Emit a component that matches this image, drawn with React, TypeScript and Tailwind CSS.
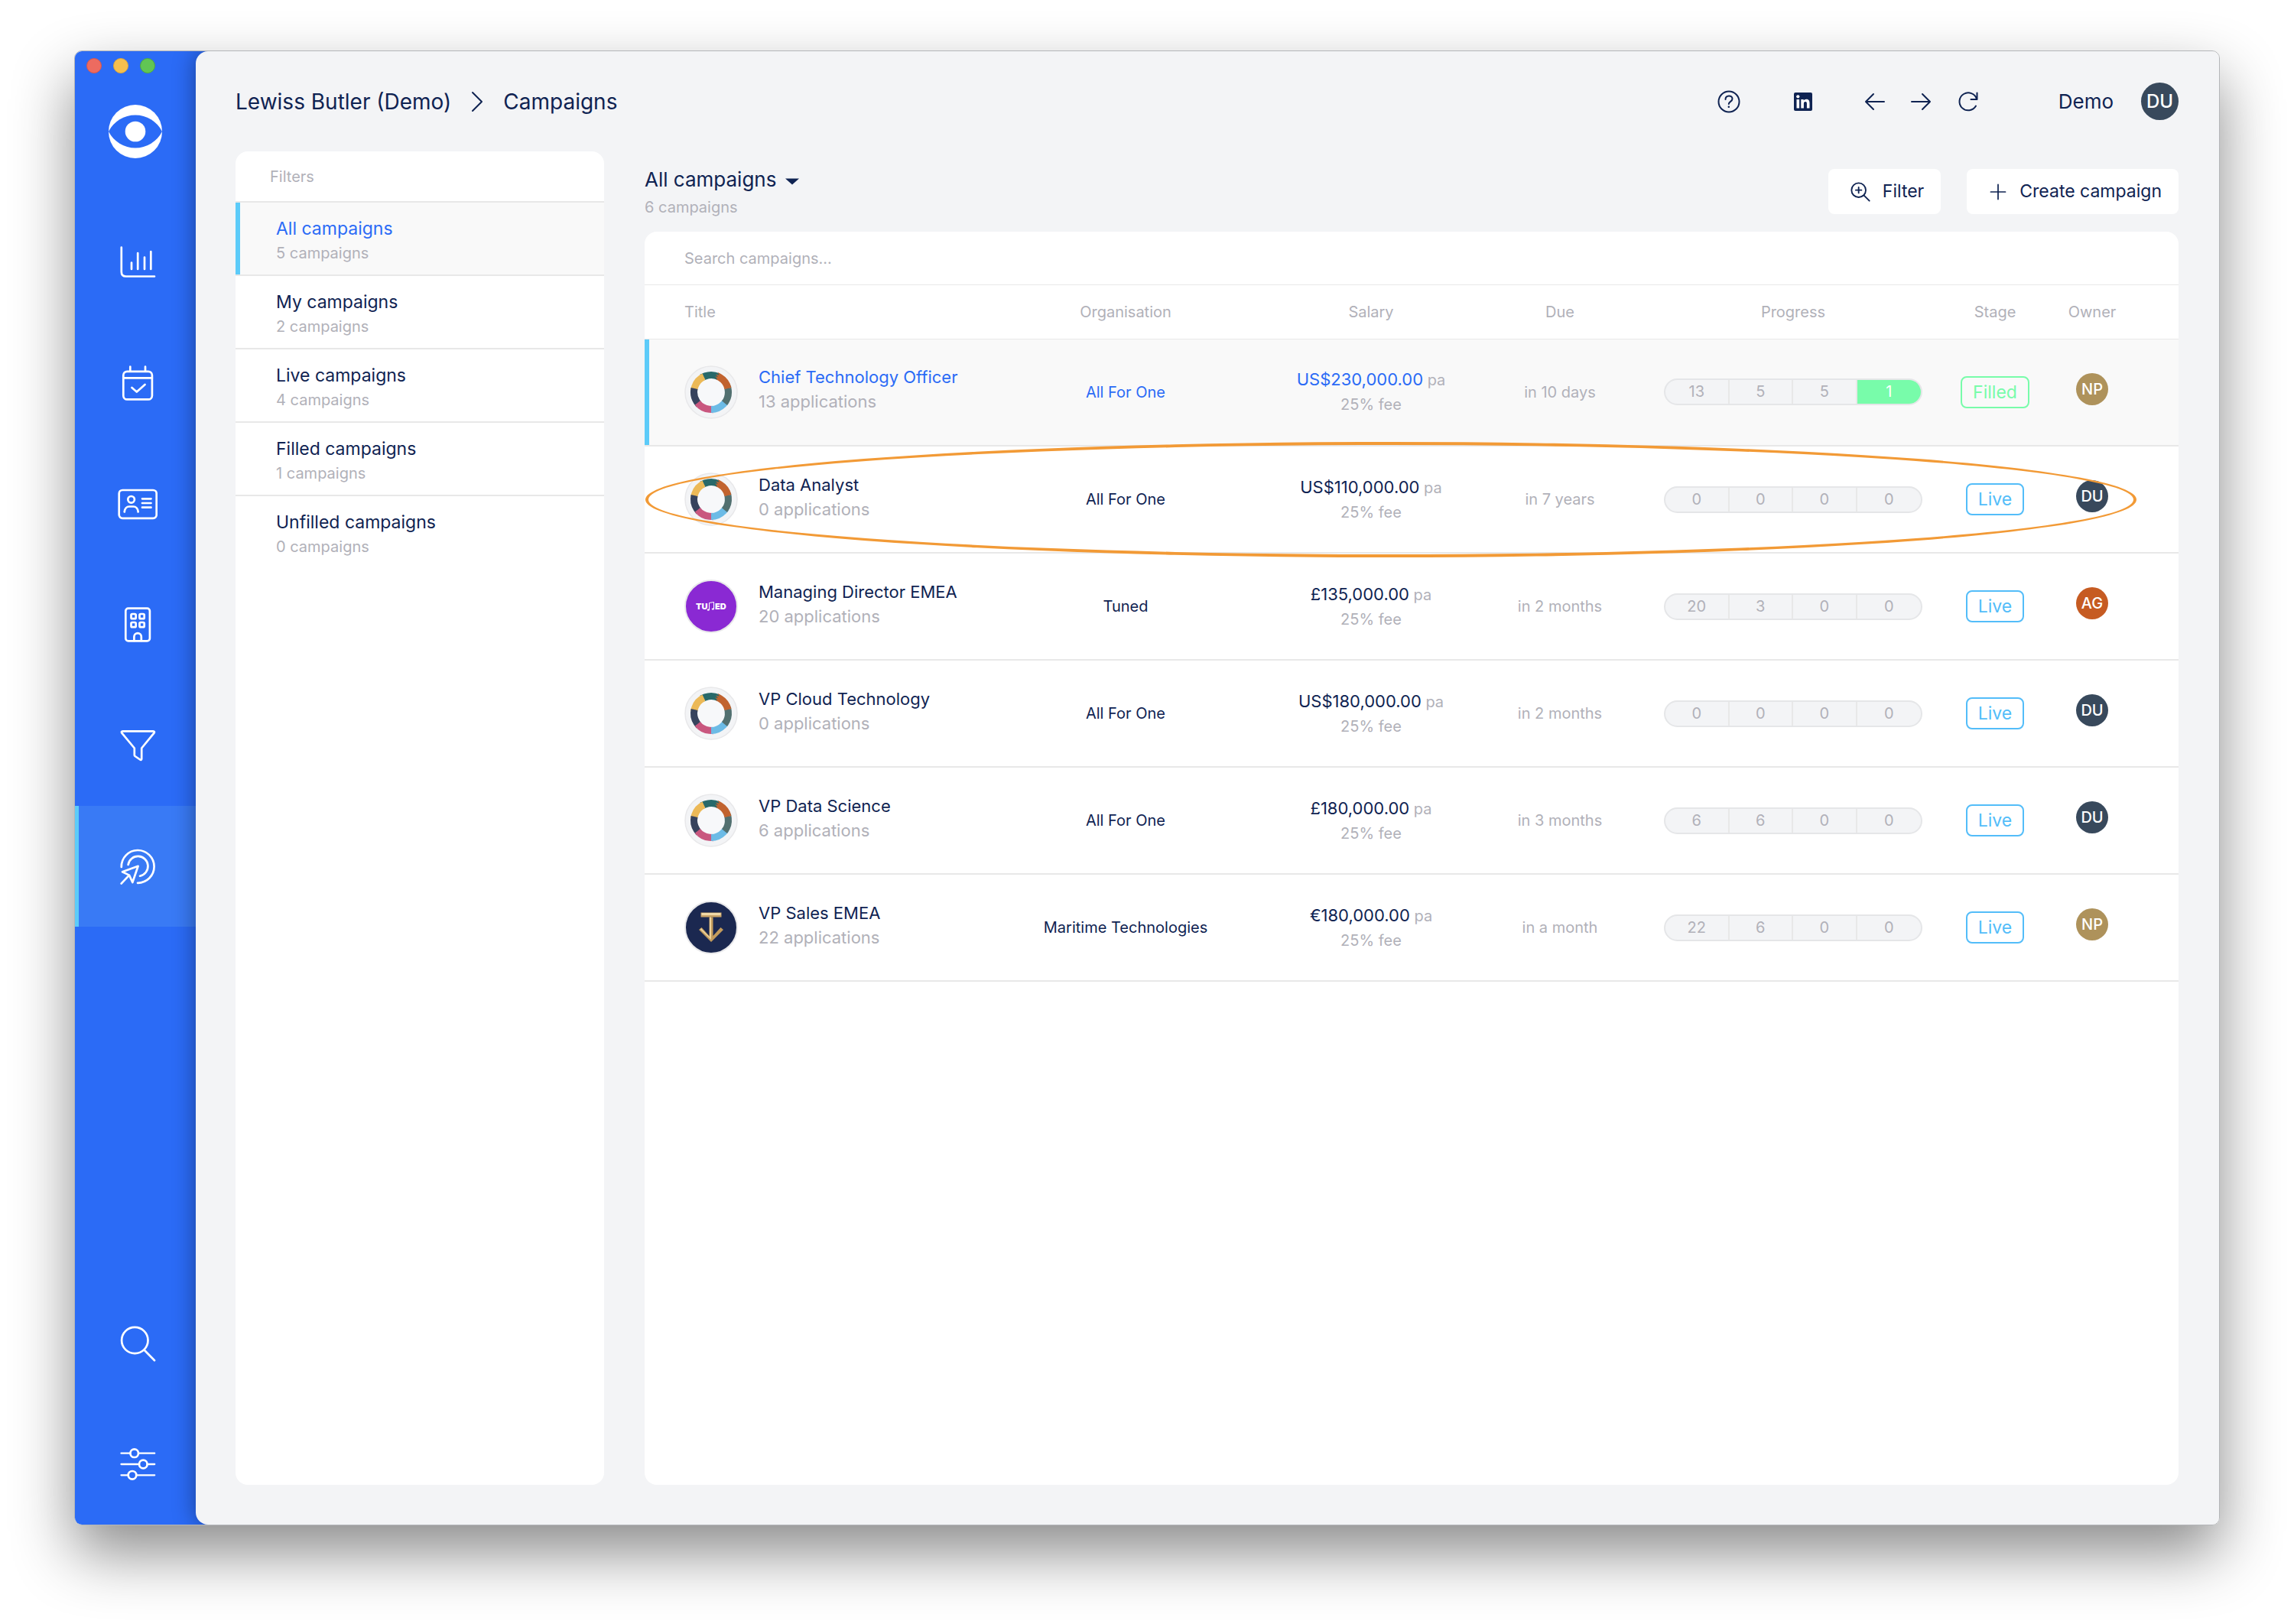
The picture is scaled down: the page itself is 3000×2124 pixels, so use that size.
import React from "react";

const navItem = "flex h-[158px] w-full items-center justify-center border-l-[5px]";

function NavIcon({ children }: { children: React.ReactNode }) {
  return (
    <svg
      className="size-[52px] shrink-0"
      viewBox="-2 -2 52 52"
      fill="none"
      stroke="#fff"
      strokeWidth="2.7"
      strokeLinecap="round"
      strokeLinejoin="round"
      aria-hidden="true"
    >
      {children}
    </svg>
  );
}

const topNav = [
  {
    label: "Dashboard",
    icon: (
      <>
        <path d="M2.8 4.5V36.5q0 6 6 6H46" />
        <path d="M16 24.5V33M24.2 12V33M33 17.5V33M41.3 10V33" />
      </>
    ),
  },
  {
    label: "Calendar",
    icon: (
      <>
        <rect x="5.3" y="8.8" width="37.6" height="36.6" rx="5" />
        <path d="M5.3 17.3h37.6M14.3 2.5v6M34 2.5v6M16.5 30l6.3 5.6L33.5 26" />
      </>
    ),
  },
  {
    label: "Contacts",
    icon: (
      <>
        <rect x="-.3" y="6" width="49" height="36.8" rx="4.5" />
        <circle cx="15.6" cy="18.3" r="4.3" />
        <path d="M6.7 34.5c.4-4 3-7 6.3-7h5.4c3.3 0 5.9 3 6.3 7M30 17.3h11.5M30 23h11.5M30 28.700h11.5" />
      </>
    ),
  },
  {
    label: "Companies",
    icon: (
      <>
        <rect x="8.3" y="2.6" width="31.6" height="42.8" rx="3.5" />
        <rect x="15.5" y="10" width="6.2" height="6.2" rx="1.5" />
        <rect x="26.5" y="10" width="6.2" height="6.2" rx="1.5" />
        <rect x="15.5" y="21" width="6.2" height="6.2" rx="1.5" />
        <rect x="26.5" y="21" width="6.2" height="6.2" rx="1.5" />
        <path d="M19.4 45v-5.2a4.7 4.7 0 0 1 9.4 0V45" />
      </>
    ),
  },
  {
    label: "Pipeline",
    icon: (
      <path d="M4.5 5.3h39.8c1.7 0 2 1.3 1.2 2.3L29.2 27.5v14c0 1.3-1 1.7-2 1L20.6 38c-.6-.4-.8-.9-.8-1.5v-9L3.3 7.6c-.8-1-.5-2.3 1.2-2.3z" />
    ),
  },
  {
    label: "Campaigns",
    active: true,
    icon: (
      <>
        <path d="M2.8 25A21.4 21.4 0 1 1 24 45.8" />
        <path d="M11.6 22A13 13 0 1 1 27 36.7" />
        <path d="M24.6 23.8 4 31.2l9 4.400 4.300 9.400zM13 35.6 2.6 46.6" />
      </>
    ),
  },
];

const bottomNav = [
  {
    label: "Search",
    icon: (
      <>
        <circle cx="20.3" cy="20" r="17.2" />
        <path d="M33 33l13 13.2" />
      </>
    ),
  },
  {
    label: "Settings",
    icon: (
      <>
        <path d="M2.5 9.7h11.7M25.2 9.7h21M2.5 24h23.300M36.8 24h9.400M2.5 38.3h9M22.5 38.3h23.700" strokeWidth="2.3" />
        <circle cx="19.7" cy="9.7" r="5.3" />
        <circle cx="31.3" cy="24" r="5.3" />
        <circle cx="17" cy="38.3" r="5.3" />
      </>
    ),
  },
];

const filters = [
  { name: "All campaigns", count: "5 campaigns", active: true },
  { name: "My campaigns", count: "2 campaigns" },
  { name: "Live campaigns", count: "4 campaigns" },
  { name: "Filled campaigns", count: "1 campaigns" },
  { name: "Unfilled campaigns", count: "0 campaigns" },
];

type Row = {
  logo: "hands" | "tuned" | "maritime";
  title: string;
  apps: string;
  org: string;
  salary: string;
  due: string;
  progress: number[];
  stage: "Filled" | "Live";
  owner: "NP" | "DU" | "AG";
  active?: boolean;
};

const rows: Row[] = [
  { logo: "hands", title: "Chief Technology Officer", apps: "13 applications", org: "All For One", salary: "US$230,000.00", due: "in 10 days", progress: [13, 5, 5, 1], stage: "Filled", owner: "NP", active: true },
  { logo: "hands", title: "Data Analyst", apps: "0 applications", org: "All For One", salary: "US$110,000.00", due: "in 7 years", progress: [0, 0, 0, 0], stage: "Live", owner: "DU" },
  { logo: "tuned", title: "Managing Director EMEA", apps: "20 applications", org: "Tuned", salary: "£135,000.00", due: "in 2 months", progress: [20, 3, 0, 0], stage: "Live", owner: "AG" },
  { logo: "hands", title: "VP Cloud Technology", apps: "0 applications", org: "All For One", salary: "US$180,000.00", due: "in 2 months", progress: [0, 0, 0, 0], stage: "Live", owner: "DU" },
  { logo: "hands", title: "VP Data Science", apps: "6 applications", org: "All For One", salary: "£180,000.00", due: "in 3 months", progress: [6, 6, 0, 0], stage: "Live", owner: "DU" },
  { logo: "maritime", title: "VP Sales EMEA", apps: "22 applications", org: "Maritime Technologies", salary: "€180,000.00", due: "in a month", progress: [22, 6, 0, 0], stage: "Live", owner: "NP" },
];

const ownerColor = { NP: "bg-[#ae925b]", DU: "bg-[#38495c]", AG: "bg-[#c65b22]" };

const arms = [
  { color: "#28696a", angle: 0 },
  { color: "#ecb957", angle: 309 },
  { color: "#37435d", angle: 257 },
  { color: "#c9577f", angle: 206 },
  { color: "#6cbbe6", angle: 154 },
  { color: "#527070", angle: 103 },
  { color: "#c1632f", angle: 51 },
];

function HandsLogo() {
  return (
    <svg viewBox="0 0 70 70" className="size-[70px]" aria-hidden="true">
      <circle cx="35" cy="35" r="34" fill="#f3f4f6" stroke="#e8e8ea" strokeWidth="1.5" />
      <circle cx="35" cy="35" r="19" fill="#f7f8fa" />
      {arms.map((a) => (
        <g key={a.angle} transform={`rotate(${a.angle} 35 35)`}>
          <path
            fill={a.color}
            d="M46.8 10.7A27 27 0 0 0 25.8 9.6L20 12l4.400.6-4 3 4.600-.4-2.700 3 4.400-.9-1.700 2.500 4-1.600A18 18 0 0 1 42.9 18.8z"
          />
        </g>
      ))}
    </svg>
  );
}

function TunedLogo() {
  return (
    <svg viewBox="0 0 70 70" className="size-[70px]" aria-hidden="true">
      <circle cx="35" cy="35" r="34" fill="#8a29d3" stroke="#e8e8ea" strokeWidth="2" />
      <text x="15" y="39" fill="#fff" fontFamily="Inter" fontWeight="900" fontSize="11">TU</text>
      <text x="40" y="39" fill="#fff" fontFamily="Inter" fontWeight="900" fontSize="11">ED</text>
      <path d="M32.5 39.5v-9l6-1v9" fill="none" stroke="#fff" strokeWidth="1" />
      <ellipse cx="31.3" cy="39.7" rx="1.6" ry="1.1" fill="#fff" />
      <ellipse cx="37.3" cy="38.6" rx="1.6" ry="1.1" fill="#fff" />
    </svg>
  );
}

function MaritimeLogo() {
  return (
    <svg viewBox="0 0 70 70" className="size-[70px]" aria-hidden="true">
      <circle cx="35" cy="35" r="34" fill="#1b2850" stroke="#e8e8ea" strokeWidth="2" />
      <path d="M21.5 15.5h27v6h-27z" fill="#c9a367" />
      <path d="M22.5 16h25v3h-25z" fill="#f0d9a8" />
      <path d="M32.5 21.5h5V46l10-11 3.500 3-16 16-16-16 3.500-3 10 11z" fill="#c39b5c" />
      <path d="M33 21.5h2V51L20.5 37.5l1.500-1.500 11 11.500z" fill="#ecd29c" />
    </svg>
  );
}

const logos = { hands: HandsLogo, tuned: TunedLogo, maritime: MaritimeLogo };

function HeaderIcon({ children, className }: { children: React.ReactNode; className: string }) {
  return (
    <svg className={className} viewBox="0 0 30 30" fill="none" stroke="#0f2352" strokeWidth="2" strokeLinecap="round" strokeLinejoin="round" aria-hidden="true">
      {children}
    </svg>
  );
}

function Sidebar() {
  return (
    <aside className="relative flex w-[174px] shrink-0 flex-col bg-[#2b6bf6] pr-4">
      <div className="flex gap-[15px] pt-[9px] pl-[15px]">
        <button aria-label="Close" className="size-5 rounded-full border border-[#d8574c] bg-[#ed6b60]" />
        <button aria-label="Minimise" className="size-5 rounded-full border border-[#dba63c] bg-[#f5bf4f]" />
        <button aria-label="Zoom" className="size-5 rounded-full border border-[#4fa93f] bg-[#61c654]" />
      </div>
      <div className="flex h-[168px] justify-center pt-[41px]">
        <svg viewBox="0 0 70 70" className="size-[70px]" aria-label="Logo">
          <circle cx="35" cy="35" r="35" fill="#fff" />
          <path d="M0 35A39.3 39.3 0 0 1 70 35A39.3 39.3 0 0 1 0 35z" fill="#2b6bf6" />
          <circle cx="35" cy="35" r="13.3" fill="#fff" />
        </svg>
      </div>
      <nav className="flex flex-1 flex-col" aria-label="Main">
        {topNav.map((n) => (
          <button
            key={n.label}
            aria-label={n.label}
            className={`${navItem} ${n.active ? "border-[#5ccbf9] bg-[#397af5]" : "border-transparent"}`}
          >
            <NavIcon>{n.icon}</NavIcon>
          </button>
        ))}
        <div className="flex-1" />
        {bottomNav.map((n) => (
          <button key={n.label} aria-label={n.label} className={`${navItem} border-transparent`}>
            <NavIcon>{n.icon}</NavIcon>
          </button>
        ))}
      </nav>
    </aside>
  );
}

function TopBar() {
  return (
    <header className="flex h-[131px] shrink-0 items-center text-[28px] leading-[34px]">
      <nav className="flex items-center" aria-label="Breadcrumb">
        <a href="#">Lewiss Butler (Demo)</a>
        <svg viewBox="0 0 16 28" className="mx-[26px] h-7 w-4" fill="none" stroke="#0f2352" strokeWidth="2" strokeLinecap="round" strokeLinejoin="round" aria-hidden="true">
          <path d="M2 2l12 12L2 26" />
        </svg>
        <a href="#">Campaigns</a>
      </nav>
      <div className="ml-auto flex items-center">
        <button aria-label="Help">
          <HeaderIcon className="size-[30px]">
            <circle cx="15" cy="15" r="13.5" />
            <path d="M10.5 12c0-6 9-6 9-.8 0 3.600-4.700 3.600-4.700 6.800" />
            <circle cx="14.8" cy="21.8" r=".6" fill="#0f2352" strokeWidth="1.3" />
          </HeaderIcon>
        </button>
        <button aria-label="LinkedIn" className="ml-[70px]">
          <svg viewBox="0 0 24 24" className="size-6" aria-hidden="true">
            <rect width="24" height="24" rx="2" fill="#0f2352" />
            <path fill="#fff" d="M3.5 9h3.600v11.500H3.5zM9.3 9h3.400v1.600c.6-1 1.800-1.900 3.500-1.900 3.600 0 4.300 2.400 4.300 5.500v6.300h-3.600v-5.600c0-1.300 0-3-1.900-3s-2.100 1.400-2.100 2.900v5.700H9.3z" />
            <circle cx="5.3" cy="5.3" r="2.1" fill="#fff" />
          </svg>
        </button>
        <button aria-label="Back" className="ml-[67px]">
          <HeaderIcon className="size-[30px]">
            <path d="M27 15H3M13 5L3 15l10 10" />
          </HeaderIcon>
        </button>
        <button aria-label="Forward" className="ml-[30px]">
          <HeaderIcon className="size-[30px]">
            <path d="M3 15h24M17 5l10 10-10 10" />
          </HeaderIcon>
        </button>
        <button aria-label="Refresh" className="ml-[32px]">
          <HeaderIcon className="size-[30px]">
            <path d="M26.5 3.500v8.500H18.5M26 11.500A11.5 11.5 0 1 0 25 20.5" />
          </HeaderIcon>
        </button>
        <span className="ml-[103px] text-[26px]">Demo</span>
        <span className="ml-9 flex size-[49px] items-center justify-center rounded-full bg-[#38495c] text-2xl font-medium text-white">DU</span>
      </div>
    </header>
  );
}

function FilterPanel() {
  return (
    <section className="w-[482px] shrink-0 overflow-hidden rounded-2xl bg-white">
      <h2 className="flex h-[67px] items-center border-b-2 border-[#e8e8e8] pl-[45px] text-[20px] text-[#b1b1b9]">Filters</h2>
      <ul>
        {filters.map((f) => (
          <li key={f.name} className="border-b-2 border-[#e8e8e8] last:border-0">
            <button
              className={`flex h-[94px] w-full flex-col justify-center border-l-[6px] pt-[6px] pl-[47px] text-left ${
                f.active ? "border-[#5ccbf9] bg-[#f9f9f9] text-[#2b6bf6]" : "border-transparent"
              }`}
            >
              <span className="text-[23px] leading-8">{f.name}</span>
              <span className="text-[20px] leading-8 text-[#b1b1b9]">{f.count}</span>
            </button>
          </li>
        ))}
      </ul>
    </section>
  );
}

function CampaignRow({ row }: { row: Row }) {
  const Logo = logos[row.logo];
  return (
    <tr className={`h-[140px] border-b-2 border-[#e8e8e8] ${row.active ? "bg-[#f9f9f9] text-[#2b6bf6]" : ""}`}>
      <td className={`p-0 pl-[52px] ${row.active ? "shadow-[inset_6px_0_0_#5ccbf9]" : ""}`}>
        <div className="flex items-center gap-[27px]">
          <Logo />
          <div className="flex flex-col pb-[7px] whitespace-nowrap">
            <a href="#" className="text-[22px] leading-8">{row.title}</a>
            <span className="text-[22px] leading-8 text-[#b1b1b9]">{row.apps}</span>
          </div>
        </div>
      </td>
      <td className="p-0 text-center text-[20px]">
        <a href="#">{row.org}</a>
      </td>
      <td className="p-0 text-center text-[20px] leading-8 text-[#b1b1b9]">
        <div>
          <span className={row.active ? "text-[22px] text-[#2b6bf6]" : "text-[22px] text-[#0f2352]"}>{row.salary}</span> pa
        </div>
        <div>25% fee</div>
      </td>
      <td className="p-0 text-center text-[20px] text-[#b1b1b9]">{row.due}</td>
      <td className="p-0">
        <div className="mx-auto grid h-[35px] w-[338px] grid-cols-4 divide-x-2 divide-[#e8e8e8] overflow-hidden rounded-full border-2 border-[#e5e6e8] bg-[#f3f4f6] text-center text-[20px] leading-[31px] text-[#b1b1b9]">
          {row.progress.map((n, i) => (
            <span key={i} className={row.stage === "Filled" && i === 3 ? "bg-[#78fcaa] text-white" : ""}>{n}</span>
          ))}
        </div>
      </td>
      <td className="p-0 text-center">
        <span
          className={`inline-block rounded-lg border-2 px-[14px] text-[23px] leading-[38px] ${
            row.stage === "Filled" ? "border-[#78fcaa] text-[#78fcaa]" : "border-[#53bdf9] text-[#53bdf9]"
          }`}
        >
          {row.stage}
        </span>
      </td>
      <td className="p-0 pr-[53px] pb-2">
        <span className={`mx-auto flex size-[42px] items-center justify-center rounded-full text-[20px] font-medium text-white ${ownerColor[row.owner]}`}>
          {row.owner}
        </span>
      </td>
    </tr>
  );
}

function Campaigns() {
  return (
    <section className="flex min-w-0 flex-1 flex-col">
      <div className="flex h-[105px] shrink-0 items-start">
        <div className="pt-[21px]">
          <button className="flex items-center gap-3 text-[26px] leading-8">
            All campaigns
            <svg viewBox="0 0 18 9" className="mt-1 h-[9px] w-[18px]" aria-hidden="true">
              <path d="M0 .5h18L9 8.5z" fill="#0f2352" />
            </svg>
          </button>
          <p className="mt-1 text-[20px] leading-8 text-[#b1b1b9]">6 campaigns</p>
        </div>
        <div className="ml-auto flex gap-[34px] pt-[23px] text-[23px]">
          <button className="flex h-[59px] items-center gap-[15px] rounded-lg bg-white pr-[22px] pl-[28px]">
            <HeaderIcon className="size-[28px]">
              <circle cx="12.5" cy="12.5" r="10" />
              <path d="M20 20l7.500 7.500M12.5 8.5v8M8.5 12.5h8" />
            </HeaderIcon>
            Filter
          </button>
          <button className="flex h-[59px] items-center gap-[15px] rounded-lg bg-white pr-[22px] pl-[28px]">
            <HeaderIcon className="size-[26px]">
              <path d="M15 4v22M4 15h22" />
            </HeaderIcon>
            Create campaign
          </button>
        </div>
      </div>
      <div className="flex-1 overflow-hidden rounded-2xl bg-white">
        <input
          type="text"
          aria-label="Search campaigns"
          placeholder="Search campaigns..."
          className="block h-[70px] w-full border-b border-[#e8e8e8] px-[52px] text-[20px] outline-none placeholder:text-[#b1b1b9]"
        />
        <div className="relative">
          <table className="w-full table-fixed border-collapse">
            <colgroup>
              <col className="w-[447px]" />
              <col className="w-[364px]" />
              <col className="w-[278px]" />
              <col className="w-[216px]" />
              <col className="w-[394px]" />
              <col className="w-[134px]" />
              <col className="w-[173px]" />
            </colgroup>
            <thead>
              <tr className="h-[70px] border-b border-[#e8e8e8] text-[20px] text-[#b1b1b9]">
                <th className="p-0 pl-[52px] text-left font-normal">Title</th>
                <th className="p-0 font-normal">Organisation</th>
                <th className="p-0 font-normal">Salary</th>
                <th className="p-0 font-normal">Due</th>
                <th className="p-0 font-normal">Progress</th>
                <th className="p-0 font-normal">Stage</th>
                <th className="p-0 pr-[53px] font-normal">Owner</th>
              </tr>
            </thead>
            <tbody>
              {rows.map((r) => (
                <CampaignRow key={r.title} row={r} />
              ))}
            </tbody>
          </table>
          <div className="pointer-events-none absolute top-[205px] right-[55px] left-px h-[151px] rounded-[50%] border-4 border-[#f29a36]" />
        </div>
      </div>
    </section>
  );
}

export default function App() {
  return (
    <div className="flex min-h-screen bg-white px-[97px] pt-[66px] pb-[129px] font-[Inter,sans-serif] text-[#0f2352]">
      <div className="flex flex-1 overflow-hidden rounded-[10px] border border-[#b4b6b9] shadow-[0_36px_80px_rgba(0,0,0,0.46)]">
        <Sidebar />
        <main className="relative -ml-4 flex min-w-0 flex-1 flex-col rounded-l-2xl bg-[#f3f4f6] pr-[53px] pb-[52px] pl-[52px] shadow-[0_0_30px_rgba(0,0,0,0.4)]">
          <TopBar />
          <div className="flex flex-1 gap-[53px]">
            <FilterPanel />
            <Campaigns />
          </div>
        </main>
      </div>
    </div>
  );
}
